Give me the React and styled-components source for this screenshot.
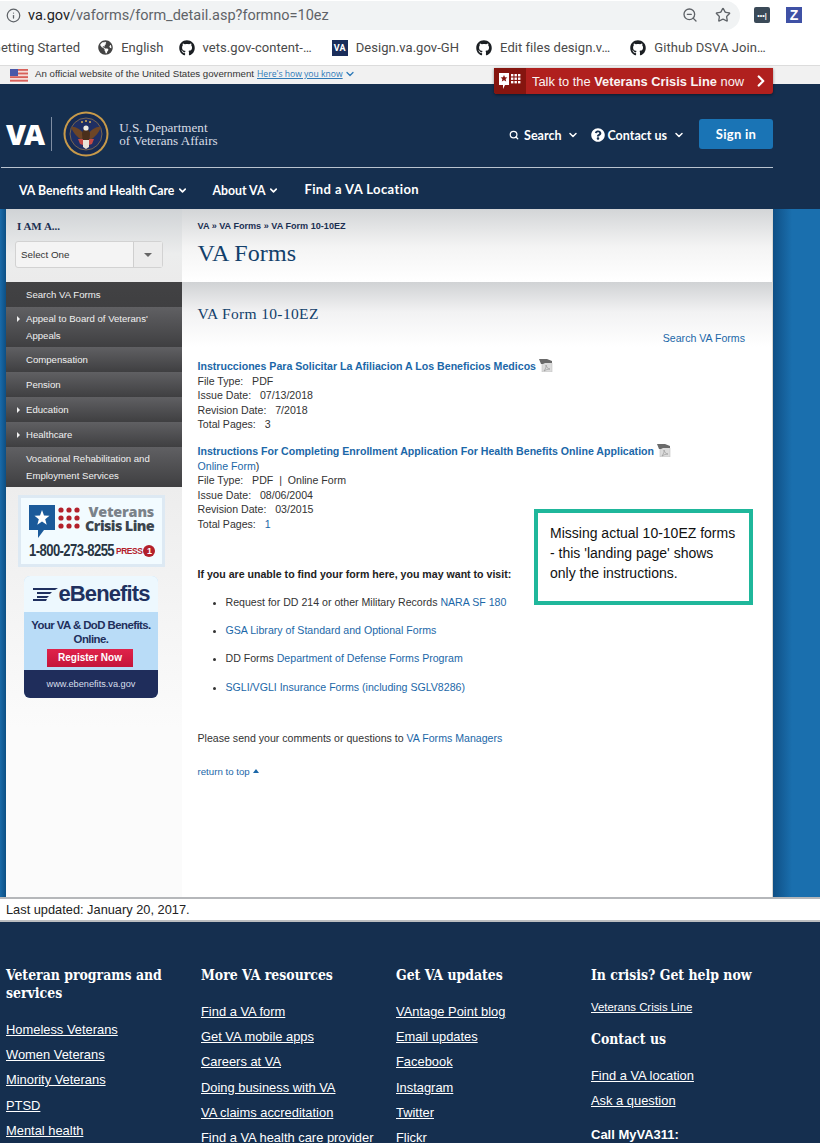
import React from 'react';
import styled, { createGlobalStyle } from 'styled-components';
import { FaGithub, FaGlobeAmericas, FaQuestionCircle } from 'react-icons/fa';
import { Info, ZoomOut, Star, Search, ChevronDown, ChevronRight } from 'lucide-react';

const navy = '#152f4f';
const linkBlue = '#1b67a8';

const GlobalStyle = createGlobalStyle`
  html, body {
    margin: 0;
    padding: 0;
    background: #fff;
  }
  * {
    box-sizing: border-box;
  }
`;

const Page = styled.div`
  position: relative;
  width: 820px;
  height: 1143px;
  overflow: hidden;
  font-family: "Liberation Sans", Arial, sans-serif;
`;

/* browser chrome */
const UrlRow = styled.div`
  display: flex;
  align-items: center;
  height: 30px;
  background: #fff;
`;

const UrlPill = styled.div`
  display: flex;
  align-items: center;
  flex: none;
  width: 740px;
  height: 29px;
  padding: 0 9px 1px 6px;
  margin-top: 1px;
  background: #f1f3f4;
  border-radius: 0 15px 15px 0;
  color: #5f6368;
  font-family: "Roboto", sans-serif;
  font-size: 14.5px;
`;

const UrlHost = styled.span`
  margin-left: 7px;
  color: #202124;
`;

const UrlTools = styled.div`
  display: flex;
  align-items: center;
  gap: 17px;
  margin-left: auto;
  color: #5f6368;
`;

const Extensions = styled.div`
  display: flex;
  align-items: center;
  gap: 16px;
  margin-left: 14px;
`;

const PassBadge = styled.div`
  display: flex;
  align-items: center;
  justify-content: center;
  gap: 1px;
  width: 16px;
  height: 16px;
  background: #3b4a58;
  border-radius: 2px;
  color: #fff;
  font-size: 7px;
  font-weight: 700;
  line-height: 1;
`;

const ZBadge = styled.div`
  width: 16px;
  height: 16px;
  background: #3f51a5;
  color: #fff;
  font-size: 14px;
  font-weight: 700;
  line-height: 16px;
  text-align: center;
`;

const Bookmarks = styled.div`
  display: flex;
  align-items: center;
  height: 36px;
  background: #fff;
  border-bottom: 1px solid #dcdcdc;
  color: #4a4a4a;
  font-family: "Roboto", sans-serif;
  font-size: 13px;
  letter-spacing: 0.05px;
  white-space: nowrap;
`;

const Bookmark = styled.div`
  display: flex;
  align-items: center;
  gap: 8px;
  margin-left: ${p => p.$gap}px;

  svg {
    flex: none;
    color: #1b1f23;
  }
`;

const FirstBookmark = styled.div`
  margin-left: -8px;
`;

const VaFav = styled.div`
  width: 16px;
  height: 16px;
  background: #1a2d5a;
  color: #fff;
  font-size: 9px;
  font-weight: 700;
  line-height: 16px;
  text-align: center;
`;

/* gov banner */
const GovBanner = styled.div`
  display: flex;
  align-items: center;
  height: 18px;
  padding-left: 10px;
  background: #f1f1f1;
  color: #333;
  font-size: 9.7px;
  white-space: nowrap;
`;

const GovText = styled.span`
  margin: -3px 0 0 7px;
`;

const GovLink = styled.a`
  display: flex;
  align-items: center;
  gap: 1px;
  margin: -2px 0 0 3px;
  color: #2e7ab8;
  font-family: "Open Sans", sans-serif;
  font-size: 8.6px;
  text-decoration: underline;

  svg {
    stroke-width: 2.6;
  }
`;

const CrisisTab = styled.div`
  position: absolute;
  top: 68px;
  left: 494px;
  display: flex;
  align-items: center;
  width: 279px;
  height: 26px;
  background: #b0201e;
  border-radius: 0 0 3px 3px;
  box-shadow: 0 1px 3px rgba(0, 0, 0, 0.45);
  color: #fff;
  font-size: 12.85px;
  white-space: nowrap;
`;

const CrisisIcon = styled.div`
  display: flex;
  align-items: center;
  justify-content: center;
  flex: none;
  width: 32px;
  height: 26px;
  background: #85150f;
  border-radius: 0 0 0 3px;
`;

const CrisisLabel = styled.span`
  margin-left: 6px;
  opacity: 0.95;
`;

const CrisisArrow = styled.div`
  display: flex;
  margin-left: auto;
  margin-right: 3px;
`;

/* VA header */
const Header = styled.header`
  height: 125px;
  background: ${navy};
  color: #fff;
`;

const TopRow = styled.div`
  display: flex;
  align-items: center;
  width: 773px;
  height: 83px;
  padding: 16px 0 0 6px;
`;

const VaMark = styled.div`
  font-family: "Open Sans", sans-serif;
  font-size: 29px;
  font-weight: 800;
  line-height: 1;
  letter-spacing: -2px;
`;

const LogoRule = styled.div`
  width: 1px;
  height: 34px;
  margin: 0 11px 0 8px;
  background: #7f8ea3;
`;

const Department = styled.div`
  margin-left: 10px;
  color: #d8dde5;
  font-family: "Liberation Serif", serif;
  font-size: 13.1px;
  line-height: 13px;
`;

const Utility = styled.div`
  display: flex;
  align-items: center;
  margin-left: auto;
  font-family: "Lato", sans-serif;
  font-size: 12.5px;
  font-weight: 700;
`;

const UtilityLink = styled.div`
  display: flex;
  align-items: center;
  margin-left: ${p => p.$gap}px;
  padding-top: 3px;

  span {
    margin: 0 6px 0 ${p => p.$iconGap}px;
  }
`;

const SignIn = styled.div`
  width: 74px;
  height: 30px;
  margin-left: 14px;
  background: #1a74b5;
  border-radius: 3px;
  font-size: 13px;
  line-height: 30px;
  text-align: center;
  letter-spacing: 0.3px;
`;

const HeaderRule = styled.div`
  width: 772px;
  height: 1px;
  margin-left: 1px;
  background: #b9c3cf;
`;

const MainNav = styled.nav`
  display: flex;
  align-items: center;
  height: 41px;
  padding-left: 19px;
  font-family: "Lato", sans-serif;
  font-size: 12.3px;
  font-weight: 700;
`;

const NavItem = styled.div`
  display: flex;
  align-items: center;
  gap: 3px;
  margin-right: 24px;
  padding-top: 3px;
`;

const NavPlain = styled.div`
  margin-left: 1px;
  font-size: 13px;
  letter-spacing: 0.4px;
`;

/* main */
const Body = styled.div`
  display: flex;
  height: 688px;
  background: linear-gradient(90deg, #1a6aa8 0, #0c4f84 6px, transparent 6px),
    linear-gradient(90deg, #0f4f85 773px, #1a6fae 792px);
`;

const Panel = styled.div`
  display: flex;
  flex: none;
  width: 767px;
  margin-left: 6px;
  background: #fff;
  border-right: 1px solid #d8d6d2;
`;

const Sidebar = styled.aside`
  flex: none;
  width: 176px;
  background: #fbfbfb;
`;

const IamBlock = styled.div`
  height: 73px;
  padding: 11px 0 0 11px;
  background: linear-gradient(180deg, #d0d3d6 0, #eceded 45px, #ebebeb 100%);
`;

const IamTitle = styled.div`
  color: #1b2f52;
  font-family: "Liberation Serif", serif;
  font-size: 11px;
  font-weight: 700;
`;

const SelectBox = styled.div`
  display: flex;
  width: 148px;
  height: 27px;
  margin: 9px 0 0 -2px;
  background: #f4f4f4;
  border: 1px solid #d2d2d2;
  border-radius: 3px;
`;

const SelectText = styled.div`
  flex: 1;
  padding-left: 5px;
  color: #333;
  font-size: 9.8px;
  line-height: 25px;
`;

const SelectCaret = styled.div`
  display: flex;
  align-items: center;
  justify-content: center;
  width: 29px;
  background: #ececec;
  border-left: 1px solid #cfcfcf;

  &::after {
    content: '';
    border-top: 4px solid #666;
    border-left: 4px solid transparent;
    border-right: 4px solid transparent;
  }
`;

const SideNav = styled.div`
  display: flex;
  flex-direction: column;
`;

const SideLink = styled.div`
  position: relative;
  display: flex;
  align-items: center;
  height: ${p => (p.$double ? 40 : 25)}px;
  padding-left: 20px;
  background: linear-gradient(180deg, ${p => (p.$first ? '#424244' : '#606063')} 0, #3f3f41 100%);
  color: #f1f1f1;
  font-size: 9.6px;
  line-height: 17px;

  ${p => p.$arrow && `
    &::before {
      content: '';
      position: absolute;
      left: 11px;
      top: ${p.$double ? 9 : 10}px;
      border-left: 3px solid #f1f1f1;
      border-top: 3px solid transparent;
      border-bottom: 3px solid transparent;
    }
  `}
`;

const Promos = styled.div`
  display: flex;
  flex-direction: column;
  align-items: flex-start;
  height: 241px;
  padding: 8px 0 0 12px;
  background: linear-gradient(180deg, #ededed 0, #fbfbfb 100%);
`;

const CrisisPromo = styled.div`
  width: 147px;
  height: 72px;
  padding: 7px 0 0 8px;
  background: #f2fbff;
  border: 3px solid #dde9f3;
`;

const PromoTop = styled.div`
  display: flex;
  align-items: flex-start;
  height: 33px;
`;

const DotsWrap = styled.div`
  display: flex;
  margin: 2px 0 0 3px;
`;

const PromoName = styled.div`
  margin-left: 5px;
  color: #7a8289;
  font-family: "Open Sans", sans-serif;
  font-size: 14.4px;
  font-weight: 800;
  line-height: 14px;
  text-align: right;
  letter-spacing: -0.2px;
  white-space: nowrap;
`;

const PromoNameStrong = styled.div`
  color: #3c454e;
  letter-spacing: -0.6px;
`;

const PromoPhoneRow = styled.div`
  display: flex;
  align-items: center;
  margin-top: 3px;
`;

const PromoPhone = styled.div`
  flex: none;
  width: 87px;
  color: #283543;
  font-size: 17px;
  font-weight: 700;
  letter-spacing: -0.75px;
  white-space: nowrap;
  transform: scaleX(0.77);
  transform-origin: left center;
`;

const PromoPress = styled.span`
  color: #b3202b;
  font-size: 8.4px;
  font-weight: 700;
  letter-spacing: -0.4px;
`;

const PressOne = styled.span`
  width: 12px;
  height: 12px;
  margin-left: 1px;
  background: #b3202b;
  border-radius: 50%;
  color: #fff;
  font-size: 9px;
  font-weight: 700;
  line-height: 12px;
  text-align: center;
`;

const EBenefits = styled.div`
  width: 134px;
  height: 122px;
  margin: 9px 0 0 6px;
  background: #b9dcf7;
  border-radius: 6px;
  overflow: hidden;
`;

const EbTop = styled.div`
  display: flex;
  align-items: center;
  justify-content: center;
  height: 36px;
  background: #edf8fe;
  color: #20305f;
  font-size: 22px;
  font-weight: 700;
  letter-spacing: -0.9px;
`;

const EbCopy = styled.div`
  height: 58px;
  padding-top: 6px;
  color: #1f2f5c;
  font-size: 11.4px;
  font-weight: 700;
  line-height: 14px;
  text-align: center;
  letter-spacing: -0.55px;
`;

const EbButton = styled.div`
  width: 86px;
  height: 18px;
  margin: 3px 0 0 23px;
  background: linear-gradient(180deg, #e0234a, #c4153a);
  color: #fff;
  font-size: 10px;
  line-height: 18px;
  letter-spacing: 0;
`;

const EbFoot = styled.div`
  height: 28px;
  background: #1f2d5b;
  color: #d8dfeb;
  font-size: 9.2px;
  line-height: 28px;
  text-align: center;
`;

const Content = styled.main`
  flex: 1;
  min-width: 0;
  color: #333;
  font-size: 10.6px;
`;

const TitleBand = styled.div`
  height: 73px;
  padding: 12px 0 0 15.5px;
  background: linear-gradient(180deg, #d3d5d7 0, #f4f4f4 38px, #ffffff 72px);
`;

const Crumbs = styled.div`
  color: #1b2f52;
  font-size: 9.1px;
  font-weight: 700;
`;

const PageTitle = styled.h1`
  margin: 8px 0 0;
  color: #12406b;
  font-family: "Liberation Serif", serif;
  font-size: 24px;
  font-weight: 400;
  line-height: 28px;
  letter-spacing: 0.15px;
`;

const FormArea = styled.div`
  position: relative;
  height: 615px;
  padding: 22px 27px 0 15.5px;
  background: linear-gradient(180deg, #d0d2d4 0, #f2f2f3 30px, #ffffff 65px);
`;

const FormTitle = styled.h2`
  margin: 0;
  color: #12406b;
  font-family: "Liberation Serif", serif;
  font-size: 15.5px;
  font-weight: 400;
  line-height: 20px;
  letter-spacing: 0.35px;
`;

const SearchLink = styled.a`
  display: block;
  margin-top: 7px;
  color: ${linkBlue};
  line-height: 15px;
  text-align: right;
`;

const Result = styled.div`
  margin-top: ${p => p.$top}px;
  line-height: 14.6px;
  white-space: nowrap;
`;

const ResultTitle = styled.a`
  color: ${linkBlue};
  font-weight: 700;
`;

const PdfIcon = styled.svg`
  margin-left: 3px;
  vertical-align: -2px;
`;

const PlainLink = styled.a`
  color: ${linkBlue};
`;

const VisitHeading = styled.div`
  margin-top: 35px;
  color: #222;
  font-weight: 700;
  line-height: 15px;
`;

const VisitList = styled.ul`
  margin: 13px 0 0;
  padding: 0 0 0 28px;
  line-height: 15px;

  li {
    margin-bottom: 13.4px;
  }
`;

const SendNote = styled.div`
  margin-top: 36px;
  line-height: 15px;
`;

const BackToTop = styled.a`
  display: flex;
  align-items: center;
  gap: 3px;
  margin-top: 18px;
  color: ${linkBlue};
  font-size: 9.7px;
  line-height: 15px;

  &::after {
    content: '';
    border-bottom: 4px solid ${linkBlue};
    border-left: 3px solid transparent;
    border-right: 3px solid transparent;
  }
`;

const Callout = styled.div`
  position: absolute;
  top: 227px;
  left: 352px;
  width: 219px;
  height: 96px;
  padding: 10px 0 0 12px;
  background: #fff;
  border: 4px solid #1fb79b;
  color: #111;
  font-size: 14px;
  line-height: 20px;
`;

const Updated = styled.div`
  height: 25px;
  padding-left: 6px;
  background: #fff;
  border-top: 2px solid #b5b7ba;
  border-bottom: 2px solid #bcbec0;
  color: #222;
  font-size: 12.8px;
  line-height: 21px;
`;

/* footer */
const Footer = styled.footer`
  display: grid;
  grid-template-columns: repeat(4, 195px);
  height: 300px;
  padding: 44px 0 0 6px;
  background: ${navy};
  color: #fff;
`;

const FooterColumn = styled.div`
  display: flex;
  flex-direction: column;
  align-items: flex-start;
`;

const FooterHeading = styled.div`
  margin-bottom: ${p => p.$bottom}px;
  font-family: "DejaVu Serif Condensed", "DejaVu Serif", serif;
  font-size: 13.9px;
  font-weight: 700;
  line-height: 18px;
`;

const FooterLink = styled.a`
  margin-bottom: ${p => p.$gap || 10.2}px;
  color: #fff;
  font-size: ${p => p.$size || 12.9}px;
  line-height: 15px;
  text-decoration: underline;
  white-space: nowrap;
`;

const FooterStrong = styled.div`
  margin-top: 9px;
  font-size: 13px;
  font-weight: 700;
  line-height: 15px;
`;

const Flag = () => (
  <svg width="18" height="13" viewBox="0 0 18 13">
    <rect width="18" height="13" fill="#f4dcd8" />
    <rect y="0" width="18" height="1.8" fill="#d8605a" />
    <rect y="3.6" width="18" height="1.8" fill="#d8605a" />
    <rect y="7.2" width="18" height="1.8" fill="#d8605a" />
    <rect y="10.8" width="18" height="1.8" fill="#d8605a" />
    <rect width="8" height="7" fill="#4a58a8" />
  </svg>
);

const CrisisGlyph = () => (
  <svg width="24" height="20" viewBox="0 0 24 20">
    <path d="M1 2h10v12H7l-2 4v-4H1z" fill="#fff" />
    <path d="M6 4l1 2.3 2.4.2-1.8 1.6.6 2.4L6 9.2l-2.2 1.3.6-2.4-1.8-1.6L5 6.3z" fill="#85150f" />
    {[13, 16.5, 20].map(x => [3, 6.5, 10].map(y => (
      <rect key={`${x}-${y}`} x={x} y={y} width="2.4" height="2.4" fill="#fff" />
    )))}
  </svg>
);

const Seal = () => (
  <svg width="46" height="46" viewBox="0 0 46 46">
    <circle cx="23" cy="23" r="22.5" fill="#c79a4a" />
    <circle cx="23" cy="23" r="20.5" fill="#152a52" />
    <circle cx="23" cy="23" r="16" fill="#1f2f63" stroke="#b58c48" strokeWidth="0.6" />
    <path d="M8 16c4-1 9 2 13 7l-2 6c-4-2-9-7-11-13z" fill="#6d4526" />
    <path d="M38 16c-4-1-9 2-13 7l2 6c4-2 9-7 11-13z" fill="#6d4526" />
    <path d="M19 23c0-3 2-5 4-5s4 2 4 5l-1 8h-6z" fill="#4a2f1c" />
    <circle cx="23" cy="17" r="2.6" fill="#f1ede2" />
    <path d="M15 28h5v6l-3-1zM31 28h-5v6l3-1z" fill="#c44a45" />
    <path d="M20 29h6v7l-3 2-3-2z" fill="#e9e3d6" />
    <circle cx="19" cy="11" r="1" fill="#d9b04f" />
    <circle cx="23" cy="10" r="1" fill="#d9b04f" />
    <circle cx="27" cy="11" r="1" fill="#d9b04f" />
  </svg>
);

const Pdf = () => (
  <PdfIcon width="14" height="13" viewBox="0 0 14 13">
    <path d="M3 2h8l2 2v9H3z" fill="#dcdcdc" stroke="#c2c2c2" strokeWidth="0.6" />
    <path d="M0 0h8l5 2v2H6L4 5H2z" fill="#6a6a6a" />
    <path d="M5 12c2-3 2-4 2-6 1 3 2 4 4 4-3 0-4 1-6 2z" fill="none" stroke="#9a9a9a" strokeWidth="0.7" />
  </PdfIcon>
);

const PromoStar = () => (
  <svg width="26" height="33" viewBox="0 0 26 33">
    <path d="M0 0h26v25H15l-6 8v-8H0z" fill="#1b5a9a" />
    <path d="M13 5l2 5.5 5.5.2-4.3 3.5 1.5 5.5-4.7-3.2-4.7 3.2 1.5-5.5-4.3-3.5 5.5-.2z" fill="#fff" />
  </svg>
);

const PromoDots = () => (
  <svg width="22" height="22" viewBox="0 0 22 22">
    {[3, 11, 19].map(x => [3, 11, 19].map(y => (
      <circle key={`${x}-${y}`} cx={x} cy={y} r="2.6" fill="#b3202b" />
    )))}
  </svg>
);

const EbMark = () => (
  <svg width="26" height="15" viewBox="0 0 26 15">
    <path d="M0 1h25l-3 2H0zM4 5h15l-2 2H4zM4 9h12l-2 2H4zM0 12h14l-1 2H0z" fill="#20305f" />
  </svg>
);

const marks = [
  { label: 'English', icon: <FaGlobeAmericas size={15} color="#444" />, gap: 18 },
  { label: 'vets.gov-content-…', icon: <FaGithub size={16} />, gap: 15 },
  { label: 'Design.va.gov-GH', icon: <VaFav>VA</VaFav>, gap: 20 },
  { label: 'Edit files design.v…', icon: <FaGithub size={16} />, gap: 17 },
  { label: 'Github DSVA Join…', icon: <FaGithub size={16} />, gap: 20 }
];

const sideLinks = [
  { label: 'Search VA Forms', first: true },
  { label: <>Appeal to Board of Veterans'<br />Appeals</>, arrow: true, double: true },
  { label: 'Compensation' },
  { label: 'Pension' },
  { label: 'Education', arrow: true },
  { label: 'Healthcare', arrow: true },
  { label: <>Vocational Rehabilitation and<br />Employment Services</>, double: true }
];

const columns = [
  {
    heading: <>Veteran programs and<br />services</>,
    links: ['Homeless Veterans', 'Women Veterans', 'Minority Veterans', 'PTSD', 'Mental health']
  },
  {
    heading: 'More VA resources',
    links: ['Find a VA form', 'Get VA mobile apps', 'Careers at VA', 'Doing business with VA', 'VA claims accreditation', 'Find a VA health care provider']
  },
  {
    heading: 'Get VA updates',
    links: ['VAntage Point blog', 'Email updates', 'Facebook', 'Instagram', 'Twitter', 'Flickr']
  }
];

export default function App () {
  return (
    <Page>
      <GlobalStyle />
      <UrlRow>
        <UrlPill>
          <Info size={15} color="#5f6368" />
          <UrlHost>va.gov</UrlHost>/vaforms/form_detail.asp?formno=10ez
          <UrlTools>
            <ZoomOut size={16} />
            <Star size={16} />
          </UrlTools>
        </UrlPill>
        <Extensions>
          <PassBadge>•••|</PassBadge>
          <ZBadge>Z</ZBadge>
        </Extensions>
      </UrlRow>
      <Bookmarks>
        <FirstBookmark>Getting Started</FirstBookmark>
        {marks.map(mark => (
          <Bookmark key={mark.label} $gap={mark.gap}>
            {mark.icon}
            {mark.label}
          </Bookmark>
        ))}
      </Bookmarks>
      <GovBanner>
        <Flag />
        <GovText>An official website of the United States government</GovText>
        <GovLink>Here's how you know <ChevronDown size={12} /></GovLink>
      </GovBanner>
      <CrisisTab>
        <CrisisIcon><CrisisGlyph /></CrisisIcon>
        <CrisisLabel>Talk to the <b>Veterans Crisis Line</b> now</CrisisLabel>
        <CrisisArrow><ChevronRight size={18} strokeWidth={3} /></CrisisArrow>
      </CrisisTab>

      <Header>
        <TopRow>
          <VaMark>VA</VaMark>
          <LogoRule />
          <Seal />
          <Department>U.S. Department<br />of Veterans Affairs</Department>
          <Utility>
            <UtilityLink $gap={0} $iconGap={5}>
              <Search size={10} strokeWidth={3} />
              <span>Search</span>
              <ChevronDown size={12} strokeWidth={3} />
            </UtilityLink>
            <UtilityLink $gap={12} $iconGap={2}>
              <FaQuestionCircle size={14} />
              <span>Contact us</span>
              <ChevronDown size={12} strokeWidth={3} />
            </UtilityLink>
            <SignIn>Sign in</SignIn>
          </Utility>
        </TopRow>
        <HeaderRule />
        <MainNav>
          <NavItem>VA Benefits and Health Care <ChevronDown size={11} strokeWidth={3.5} /></NavItem>
          <NavItem>About VA <ChevronDown size={11} strokeWidth={3.5} /></NavItem>
          <NavPlain>Find a VA Location</NavPlain>
        </MainNav>
      </Header>

      <Body>
        <Panel>
          <Sidebar>
            <IamBlock>
              <IamTitle>I AM A...</IamTitle>
              <SelectBox>
                <SelectText>Select One</SelectText>
                <SelectCaret />
              </SelectBox>
            </IamBlock>
            <SideNav>
              {sideLinks.map((link, i) => (
                <SideLink key={i} $arrow={link.arrow} $double={link.double} $first={link.first}>
                  <span>{link.label}</span>
                </SideLink>
              ))}
            </SideNav>
            <Promos>
              <CrisisPromo>
                <PromoTop>
                  <PromoStar />
                  <DotsWrap><PromoDots /></DotsWrap>
                  <PromoName>
                    Veterans
                    <PromoNameStrong>Crisis Line</PromoNameStrong>
                  </PromoName>
                </PromoTop>
                <PromoPhoneRow>
                  <PromoPhone>1-800-273-8255</PromoPhone>
                  <PromoPress>PRESS</PromoPress>
                  <PressOne>1</PressOne>
                </PromoPhoneRow>
              </CrisisPromo>
              <EBenefits>
                <EbTop><EbMark />eBenefits</EbTop>
                <EbCopy>
                  Your VA &amp; DoD Benefits.<br />Online.
                  <EbButton>Register Now</EbButton>
                </EbCopy>
                <EbFoot>www.ebenefits.va.gov</EbFoot>
              </EBenefits>
            </Promos>
          </Sidebar>
          <Content>
            <TitleBand>
              <Crumbs>VA » VA Forms » VA Form 10-10EZ</Crumbs>
              <PageTitle>VA Forms</PageTitle>
            </TitleBand>
            <FormArea>
              <FormTitle>VA Form 10-10EZ</FormTitle>
              <SearchLink>Search VA Forms</SearchLink>
              <Result $top={13}>
                <ResultTitle>Instrucciones Para Solicitar La Afiliacion A Los Beneficios Medicos</ResultTitle><Pdf /><br />
                File Type:&nbsp;&nbsp; PDF<br />
                Issue Date:&nbsp;&nbsp; 07/13/2018<br />
                Revision Date:&nbsp;&nbsp; 7/2018<br />
                Total Pages:&nbsp;&nbsp; 3
              </Result>
              <Result $top={12}>
                <ResultTitle>Instructions For Completing Enrollment Application For Health Benefits Online Application</ResultTitle><Pdf /><br />
                <PlainLink>Online Form</PlainLink>)<br />
                File Type:&nbsp;&nbsp; PDF &nbsp;|&nbsp; Online Form<br />
                Issue Date:&nbsp;&nbsp; 08/06/2004<br />
                Revision Date:&nbsp;&nbsp; 03/2015<br />
                Total Pages:&nbsp;&nbsp; <PlainLink>1</PlainLink>
              </Result>
              <VisitHeading>If you are unable to find your form here, you may want to visit:</VisitHeading>
              <VisitList>
                <li>Request for DD 214 or other Military Records <PlainLink>NARA SF 180</PlainLink></li>
                <li><PlainLink>GSA Library of Standard and Optional Forms</PlainLink></li>
                <li>DD Forms <PlainLink>Department of Defense Forms Program</PlainLink></li>
                <li><PlainLink>SGLI/VGLI Insurance Forms (including SGLV8286)</PlainLink></li>
              </VisitList>
              <SendNote>Please send your comments or questions to <PlainLink>VA Forms Managers</PlainLink></SendNote>
              <BackToTop>return to top</BackToTop>
              <Callout>Missing actual 10-10EZ forms<br />- this 'landing page' shows<br />only the instructions.</Callout>
            </FormArea>
          </Content>
        </Panel>
      </Body>

      <Updated>Last updated: January 20, 2017.</Updated>

      <Footer>
        {columns.map((column, i) => (
          <FooterColumn key={i}>
            <FooterHeading $bottom={20}>{column.heading}</FooterHeading>
            {column.links.map(link => <FooterLink key={link}>{link}</FooterLink>)}
          </FooterColumn>
        ))}
        <FooterColumn>
          <FooterHeading $bottom={16}>In crisis? Get help now</FooterHeading>
          <FooterLink $gap={15} $size={11.4}>Veterans Crisis Line</FooterLink>
          <FooterHeading $bottom={20}>Contact us</FooterHeading>
          <FooterLink>Find a VA location</FooterLink>
          <FooterLink>Ask a question</FooterLink>
          <FooterStrong>Call MyVA311:</FooterStrong>
        </FooterColumn>
      </Footer>
    </Page>
  );
}
